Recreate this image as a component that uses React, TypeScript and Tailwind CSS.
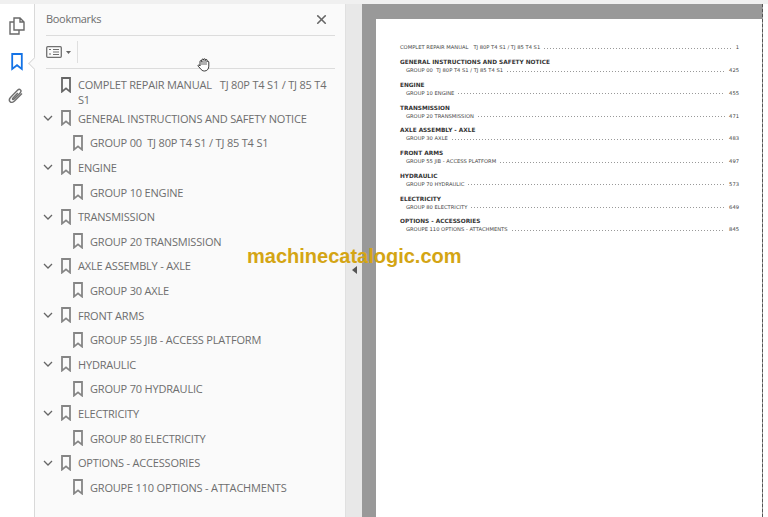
import { X } from "lucide-react";

type Row = { label: string; level: 0 | 1; chevron?: boolean; wrap?: boolean };

const ROWS: Row[] = [
  { label: "COMPLET REPAIR MANUAL \u00a0 TJ 80P T4 S1 / TJ 85 T4 S1", level: 0, wrap: true },
  { label: "GENERAL INSTRUCTIONS AND SAFETY NOTICE", level: 0, chevron: true },
  { label: "GROUP 00 \u00a0TJ 80P T4 S1 / TJ 85 T4 S1", level: 1 },
  { label: "ENGINE", level: 0, chevron: true },
  { label: "GROUP 10 ENGINE", level: 1 },
  { label: "TRANSMISSION", level: 0, chevron: true },
  { label: "GROUP 20 TRANSMISSION", level: 1 },
  { label: "AXLE ASSEMBLY - AXLE", level: 0, chevron: true },
  { label: "GROUP 30 AXLE", level: 1 },
  { label: "FRONT ARMS", level: 0, chevron: true },
  { label: "GROUP 55 JIB - ACCESS PLATFORM", level: 1 },
  { label: "HYDRAULIC", level: 0, chevron: true },
  { label: "GROUP 70 HYDRAULIC", level: 1 },
  { label: "ELECTRICITY", level: 0, chevron: true },
  { label: "GROUP 80 ELECTRICITY", level: 1 },
  { label: "OPTIONS - ACCESSORIES", level: 0, chevron: true },
  { label: "GROUPE 110 OPTIONS - ATTACHMENTS", level: 1 },
];

const TOC = [
  { head: "GENERAL INSTRUCTIONS AND SAFETY NOTICE", sub: "GROUP 00 \u00a0TJ 80P T4 S1 / TJ 85 T4 S1", page: "425" },
  { head: "ENGINE", sub: "GROUP 10 ENGINE", page: "455" },
  { head: "TRANSMISSION", sub: "GROUP 20 TRANSMISSION", page: "471" },
  { head: "AXLE ASSEMBLY - AXLE", sub: "GROUP 30 AXLE", page: "483" },
  { head: "FRONT ARMS", sub: "GROUP 55 JIB - ACCESS PLATFORM", page: "497" },
  { head: "HYDRAULIC", sub: "GROUP 70 HYDRAULIC", page: "573" },
  { head: "ELECTRICITY", sub: "GROUP 80 ELECTRICITY", page: "649" },
  { head: "OPTIONS - ACCESSORIES", sub: "GROUPE 110 OPTIONS - ATTACHMENTS", page: "845" },
];

function BookmarkIcon({ className }: { className?: string }) {
  return (
    <svg width="10" height="16" viewBox="0 0 10 16" fill="none" className={className}>
      <path d="M1 1h8v13.6L5 11.4 1 14.6z" stroke="currentColor" strokeWidth="1.8" strokeLinejoin="miter" />
    </svg>
  );
}

function Chevron() {
  return (
    <svg width="10" height="6" viewBox="0 0 10 6" fill="none" className="text-[#666]">
      <path d="M1 1l4 4 4-4" stroke="currentColor" strokeWidth="1.3" />
    </svg>
  );
}

function TocLine({ text, page, indent }: { text: string; page: string; indent?: boolean }) {
  return (
    <div className={`flex h-[8px] items-center leading-[8px] text-[5.2px] text-[#444] ${indent ? "pl-[6px]" : ""}`}>
      <span className="whitespace-pre">{text}</span>
      <span className="mx-[4px] mt-[2px] h-px min-w-0 flex-1 bg-[repeating-linear-gradient(90deg,#999_0_1px,transparent_1px_3px)]" />
      <span>{page}</span>
    </div>
  );
}

export default function App() {
  return (
    <div className="relative flex h-[517px] w-[768px] flex-col overflow-hidden bg-[#f2f2f2] font-['Open_Sans',sans-serif]">
      <div className="h-[4px] shrink-0 bg-[#f0f0f0]" />
      <div className="flex min-h-0 flex-1">
        {/* icon rail */}
        <div className="relative flex w-[35px] shrink-0 flex-col items-center border-r border-[#d9d9d9] bg-white pt-[13px]">
          <svg width="16" height="18" viewBox="0 0 16 18" fill="none" className="ml-[-1px] text-[#6a6a6a]">
            <path d="M5 1h6l4 4v8H5z M11 1v4h4 M5 5H1v12h9v-4" stroke="currentColor" strokeWidth="1.4" />
          </svg>
          <svg width="12" height="18" viewBox="0 0 12 18" fill="none" className="mt-[18px] ml-[-1px] text-[#1473e6]">
            <path d="M1.2 1h9.6v15L6 12.2 1.2 16z" stroke="currentColor" strokeWidth="1.8" />
          </svg>
          <svg width="16" height="17" viewBox="0 0 16 17" fill="none" className="mt-[16px] ml-[-2px] text-[#707070]">
            <path
              d="M14 6.5l-7.5 7.6c-1.5 1.5-3.4 1.6-4.4.6-1-1-.9-2.9.6-4.4l6.8-7c1-1 2.3-1.1 3-.4.7.7.6 2-.4 3l-6 6.2c-.5.5-1.1.6-1.4.3-.3-.3-.2-.9.3-1.4l4.8-5"
              stroke="currentColor"
              strokeWidth="1.4"
            />
          </svg>
          {/* notch pointing at the active tab */}
          <div className="absolute right-[-5px] top-[55px] h-[9px] w-[9px] rotate-45 border-b border-l border-[#d9d9d9] bg-[#fafafa]" />
        </div>

        {/* bookmarks panel */}
        <div className="flex w-[311px] shrink-0 flex-col border-r border-[#e0e0e0] bg-[#fafafa] text-[#6e6e6e]">
          <div className="flex h-[31px] shrink-0 items-center justify-between pl-[11px] pr-[16px]">
            <span className="text-[11px] tracking-[-0.3px] text-[#6e6e6e]">Bookmarks</span>
            <X size={15} strokeWidth={2.6} className="text-[#666]" />
          </div>
          <div className="ml-[11px] mr-[10px] flex h-[34px] shrink-0 items-center border-y border-[#dcdcdc]">
            <svg width="16" height="12" viewBox="0 0 16 12" fill="none" className="text-[#707070]">
              <rect x="0.7" y="0.7" width="14.6" height="10.6" rx="1" stroke="currentColor" strokeWidth="1.3" />
              <path d="M3 3.5h2M3 8h2M7 3.5h6M7 6h6M7 8.5h6" stroke="currentColor" strokeWidth="1.2" />
            </svg>
            <svg width="5" height="3" viewBox="0 0 5 3" className="ml-[4px] text-[#666]">
              <path d="M0 0h5L2.5 3z" fill="currentColor" />
            </svg>
            <div className="ml-[6px] h-[22px] w-px bg-[#dfdfdf]" />
          </div>
          <div className="pt-[4px] text-[11px] leading-[15px] tracking-[-0.19px]">
            {ROWS.map((r) => (
              <div
                key={r.label}
                className={`flex ${r.wrap ? "h-[33px] items-start pt-[4px]" : "h-[24.6px] items-center"} ${
                  r.level === 1 ? "pl-[17px]" : "pl-[5px]"
                }`}
              >
                <div className="flex w-[16px] shrink-0 justify-center">{r.chevron && <Chevron />}</div>
                <BookmarkIcon className={`ml-[5px] shrink-0 ${r.wrap ? "text-[#666]" : "text-[#858585]"}`} />
                <span className="ml-[7px] w-[256px] shrink-0">{r.label}</span>
              </div>
            ))}
          </div>
        </div>

        {/* collapse splitter */}
        <div className="flex w-[16px] shrink-0 items-center justify-center bg-[#e8e8e8] pt-[18px]">
          <svg width="5" height="8" viewBox="0 0 5 8" className="text-[#555]">
            <path d="M5 0v8L0 4z" fill="currentColor" />
          </svg>
        </div>

        {/* document view */}
        <div className="flex w-[401px] shrink-0 flex-col border-r border-dashed border-[#555] bg-[#999999]">
          <div className="h-[15px] shrink-0" />
          <div className="ml-[14px] flex-1 bg-white pl-[24px] pr-[23px] pt-[24px] font-['DejaVu_Sans',sans-serif]">
            <TocLine text={"COMPLET REPAIR MANUAL \u00a0 TJ 80P T4 S1 / TJ 85 T4 S1"} page="1" />
            <div className="pt-[7px]">
              {TOC.map((t) => (
                <div key={t.head} className="h-[22.75px] pt-[1px]">
                  <div className="h-[7px] text-[5.8px] font-bold leading-[7px] text-[#333]">{t.head}</div>
                  <TocLine text={t.sub} page={t.page} indent />
                </div>
              ))}
            </div>
          </div>
        </div>
        <div className="min-w-0 flex-1 bg-white" />
      </div>

      {/* watermark */}
      <div className="absolute left-[247px] top-[244px] font-['Liberation_Sans',sans-serif] text-[20px] font-bold leading-[24px] text-[#d4a514]">
        machinecatalogic.com
      </div>

      {/* hand cursor */}
      <svg width="14" height="15" viewBox="0 0 14 15" fill="none" className="absolute left-[197px] top-[57px] text-[#222]">
        <path
          d="M3 9V4.5a.9.9 0 011.8 0V3a.9.9 0 011.8 0v-.3a.9.9 0 011.8 0V3.4a.9.9 0 011.8 0v1.2a.9.9 0 011.6.4v4.2c0 2.6-1.6 4.8-4.3 4.8-2 0-3-.9-3.9-2.2L1.2 9.2c-.6-1 .7-1.8 1.3-1z"
          fill="#fff"
          stroke="currentColor"
          strokeWidth="0.9"
        />
        <path d="M5 4v4M7 3v5M9 3.5V8" stroke="currentColor" strokeWidth="0.7" />
      </svg>
    </div>
  );
}
